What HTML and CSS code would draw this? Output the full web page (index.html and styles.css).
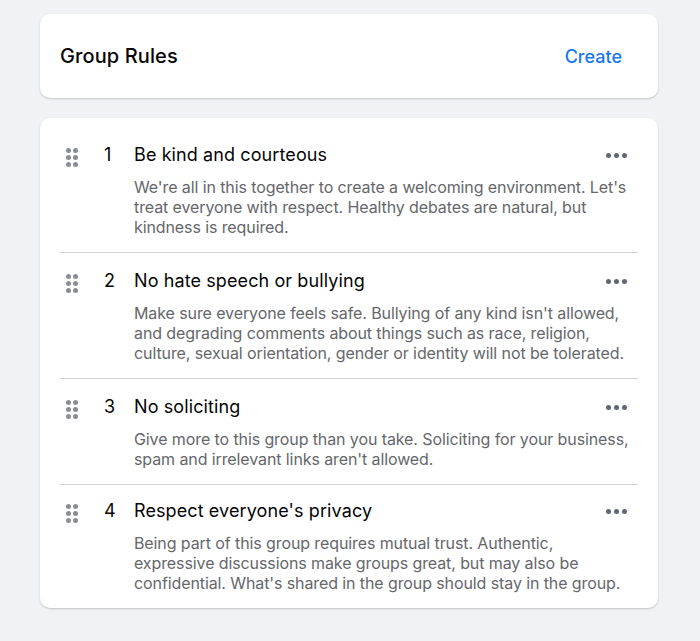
FILE: index.html
```html
<!DOCTYPE html>
<html>
<head>
<meta charset="utf-8">
<link rel="stylesheet" href="styles.css">
</head>
<body>
<div class="page">
  <div class="card header">
    <h1 class="title">Group Rules</h1>
    <a class="create">Create</a>
  </div>
  <div class="card rules">
    <div class="rule">
      <div class="handle"><span></span><span></span><span></span><span></span><span></span><span></span></div>
      <div class="num">1</div>
      <div class="rtitle">Be kind and courteous</div>
      <div class="more"><i></i><i></i><i></i></div>
      <div class="desc">We're all in this together to create a welcoming environment. Let's treat everyone with respect. Healthy debates are natural, but kindness is required.</div>
    </div>
    <div class="rule">
      <div class="handle"><span></span><span></span><span></span><span></span><span></span><span></span></div>
      <div class="num">2</div>
      <div class="rtitle">No hate speech or bullying</div>
      <div class="more"><i></i><i></i><i></i></div>
      <div class="desc">Make sure everyone feels safe. Bullying of any kind isn't allowed, and degrading comments about things such as race, religion, culture, sexual orientation, gender or identity will not be tolerated.</div>
    </div>
    <div class="rule">
      <div class="handle"><span></span><span></span><span></span><span></span><span></span><span></span></div>
      <div class="num">3</div>
      <div class="rtitle">No soliciting</div>
      <div class="more"><i></i><i></i><i></i></div>
      <div class="desc">Give more to this group than you take. Soliciting for your business, spam and irrelevant links aren't allowed.</div>
    </div>
    <div class="rule">
      <div class="handle"><span></span><span></span><span></span><span></span><span></span><span></span></div>
      <div class="num">4</div>
      <div class="rtitle">Respect everyone's privacy</div>
      <div class="more"><i></i><i></i><i></i></div>
      <div class="desc">Being part of this group requires mutual trust. Authentic, expressive discussions make groups great, but may also be confidential. What's shared in the group should stay in the group.</div>
    </div>
  </div>
</div>
</body>
</html>
```
FILE: styles.css
```css
* { box-sizing: border-box; }
html, body { margin: 0; padding: 0; }
body {
  background: #f0f2f5;
  font-family: Inter, "Liberation Sans", Arial, sans-serif;
  color: #050505;
  width: 700px;
  height: 641px;
  overflow: hidden;
}
.page {
  padding: 14px 42px 0 40px;
  display: flex;
  flex-direction: column;
  gap: 20px;
}
.card {
  background: #fff;
  border-radius: 10px;
  box-shadow: 0 1px 2px rgba(0,0,0,0.2);
}
.header {
  height: 84px;
  display: flex;
  align-items: center;
  justify-content: space-between;
  padding: 0 36px 0 20px;
}
.title {
  margin: 0;
  font-size: 20px;
  font-weight: 500;
  letter-spacing: 0.1px;
}
.create {
  color: #1877f2;
  font-size: 18px;
  font-weight: 500;
}
.rules {
  padding: 9px 20px 0 20px;
}
.rule {
  display: grid;
  grid-template-columns: 44px 30px 1fr 32px;
  grid-template-areas:
    "handle num title more"
    ". . desc desc";
  padding: 16px 0 15px 0;
  border-top: 1px solid #ced0d4;
}
.rule:first-child { border-top: none; }
.rule:last-child { padding-top: 14px; }
.handle {
  grid-area: handle;
  padding: 5px 0 0 6px;
  display: grid;
  grid-template-columns: 5px 5px;
  grid-auto-rows: 5px;
  column-gap: 2px;
  row-gap: 2px;
  align-content: start;
}
.handle span {
  width: 5px;
  height: 5px;
  border-radius: 50%;
  background: #8a8d91;
}
.num {
  grid-area: num;
  font-size: 18px;
  line-height: 24px;
}
.rtitle {
  grid-area: title;
  font-size: 18px;
  line-height: 24px;
  letter-spacing: 0.1px;
}
.desc {
  grid-area: desc;
  margin-top: 10px;
  padding-right: 8px;
  font-size: 16px;
  line-height: 20px;
  letter-spacing: -0.1px;
  color: #65676b;
}
.more {
  grid-area: more;
  display: flex;
  gap: 3px;
  padding: 10px 0 0 0;
  align-items: flex-start;
}
.more i {
  width: 5px;
  height: 5px;
  border-radius: 50%;
  background: #606770;
}
```
